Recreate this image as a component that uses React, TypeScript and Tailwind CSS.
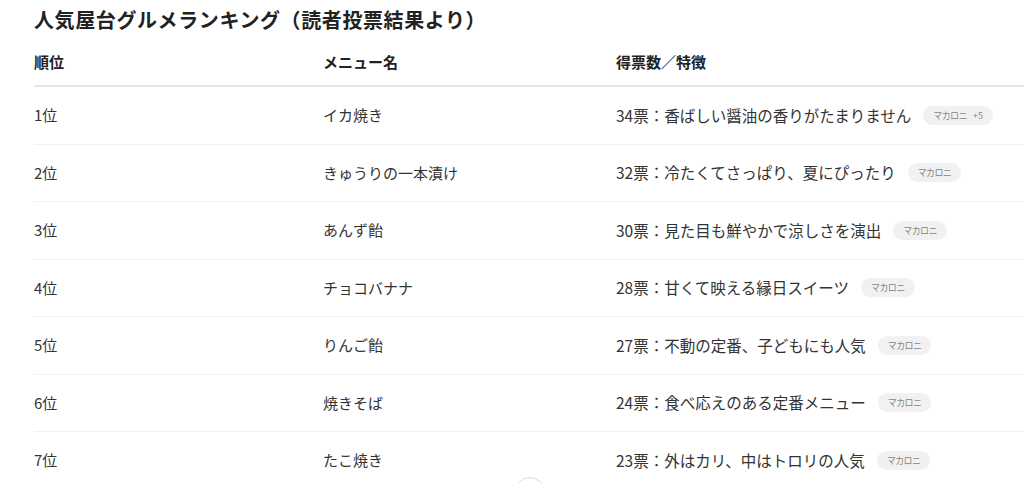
import React from "react";

type Row = {
  rank: string;
  name: string;
  votes: string;
  note: string;
  extra?: string;
};

const ROWS: Row[] = [
  { rank: "1位", name: "イカ焼き", votes: "34票", note: "香ばしい醤油の香りがたまりません", extra: "+5" },
  { rank: "2位", name: "きゅうりの一本漬け", votes: "32票", note: "冷たくてさっぱり、夏にぴったり" },
  { rank: "3位", name: "あんず飴", votes: "30票", note: "見た目も鮮やかで涼しさを演出" },
  { rank: "4位", name: "チョコバナナ", votes: "28票", note: "甘くて映える縁日スイーツ" },
  { rank: "5位", name: "りんご飴", votes: "27票", note: "不動の定番、子どもにも人気" },
  { rank: "6位", name: "焼きそば", votes: "24票", note: "食べ応えのある定番メニュー" },
  { rank: "7位", name: "たこ焼き", votes: "23票", note: "外はカリ、中はトロリの人気" },
];

const FONT = "font-['Noto_Sans_CJK_JP','Noto_Sans',sans-serif]";

const SourceChip = ({ extra }: { extra?: string }) => (
  <span className="ml-[12px] inline-flex h-[19px] items-center gap-[6px] rounded-full bg-[#f1f1f1] px-[10px] text-[9px] leading-none tracking-[-0.6px] text-[#858585]">
    <span>マカロニ</span>
    {extra && <span className="tracking-normal">{extra}</span>}
  </span>
);

export default function App() {
  return (
    <div className={`relative h-[483px] w-[1024px] overflow-hidden bg-white ${FONT}`}>
      <div className="pl-[34px]">
        <h2 className="mt-[6px] h-[28px] text-[20px] font-bold leading-[28px] tracking-[0.6px] text-[#222]">
          人気屋台グルメランキング（読者投票結果より）
        </h2>
        <div className="mt-[6px]">
          <div className="grid h-[47px] grid-cols-[289px_293px_1fr] items-center border-b-2 border-[#e4e4e4] text-[15px] font-bold text-[#222]">
            <div>順位</div>
            <div>メニュー名</div>
            <div>得票数／特徴</div>
          </div>
          {ROWS.map((r) => (
            <div
              key={r.rank}
              className="grid h-[57.5px] grid-cols-[289px_293px_1fr] items-center border-b border-[#f0f0f0] text-[15.5px] text-[#333]"
            >
              <div className="text-[15px]">{r.rank}</div>
              <div className="text-[15px]">{r.name}</div>
              <div className="flex items-center whitespace-nowrap">
                <span>
                  {r.votes}：{r.note}
                </span>
                <SourceChip extra={r.extra} />
              </div>
            </div>
          ))}
        </div>
      </div>
      <div className="absolute left-[515px] top-[477px] h-[30px] w-[30px] rounded-full border border-[#dcdcdc] bg-white" />
    </div>
  );
}
